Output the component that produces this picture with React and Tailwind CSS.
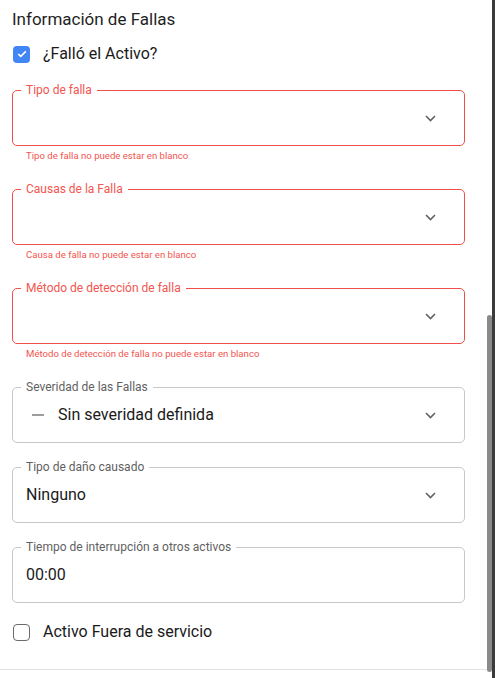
import React from 'react';

const RED = 'text-[#f2554f]';

function Chevron() {
  return (
    <svg width="11" height="7" viewBox="0 0 11 7" className="shrink-0">
      <path d="M1 1l4.5 4.5L10 1" fill="none" stroke="#616161" strokeWidth="1.6" />
    </svg>
  );
}

function Field({ label, error, helper, children, chevron = true, last }) {
  return (
    <div className={last ? '' : error ? 'mb-[27px]' : 'mb-[24px]'}>
      <div
        className={
          'relative flex h-[56px] w-[453px] items-center rounded-[5px] border pl-[13px] pr-[28px] ' +
          (error ? 'border-[#f0504a]' : 'border-[#c8c8c8]')
        }
      >
        <span
          className={
            'absolute -top-[9px] left-[8px] bg-white px-[5px] text-[12px] leading-[16px] ' +
            (error ? RED : 'text-[#5f5f5f]')
          }
        >
          {label}
        </span>
        <div className="flex flex-1 items-center text-[16px] text-[#1a1a1a]">{children}</div>
        {chevron && <Chevron />}
      </div>
      {helper && (
        <p className={'mt-[4px] pl-[14px] text-[9.6px] leading-[12px] ' + RED}>{helper}</p>
      )}
    </div>
  );
}

function Checkbox({ checked, label }) {
  return (
    <div className="flex items-center">
      {checked ? (
        <span className="flex h-[17px] w-[17px] items-center justify-center rounded-[4px] bg-[#4285f4]">
          <svg width="10" height="8" viewBox="0 0 10 8">
            <path d="M1.2 4l2.6 2.4L8.8 1.4" fill="none" stroke="white" strokeWidth="1.6" />
          </svg>
        </span>
      ) : (
        <span className="h-[17px] w-[17px] rounded-[4px] border-[1.5px] border-[#6b6b6b]" />
      )}
      <span className="ml-[13px] text-[16px] leading-[24px] text-[#1a1a1a]">{label}</span>
    </div>
  );
}

export default function App() {
  return (
    <div
      className="flex h-[678px] w-[495px] overflow-hidden bg-white"
      style={{ fontFamily: 'Roboto, "Liberation Sans", sans-serif' }}
    >
      <div className="w-[487px]">
        <div className="h-[670px] border-b border-[#e2e2e2] pl-[12px]">
          <h2 className="pt-[7px] text-[17px] leading-[24px] text-[#1f1f1f]">
            Información de Fallas
          </h2>
          <div className="mt-[11px] mb-[24px] pl-[1px]">
            <Checkbox checked label="¿Falló el Activo?" />
          </div>

          <Field label="Tipo de falla" error helper="Tipo de falla no puede estar en blanco" />
          <Field label="Causas de la Falla" error helper="Causa de falla no puede estar en blanco" />
          <Field
            label="Método de detección de falla"
            error
            helper="Método de detección de falla no puede estar en blanco"
          />
          <Field label="Severidad de las Fallas">
            <span className="ml-[6px] mr-[14px] h-[2px] w-[12px] bg-[#9e9e9e]" />
            <span>Sin severidad definida</span>
          </Field>
          <Field label="Tipo de daño causado">
            <span>Ninguno</span>
          </Field>
          <Field label="Tiempo de interrupción a otros activos" chevron={false} last>
            <span>00:00</span>
          </Field>

          <div className="mt-[17px] pl-[1px]">
            <Checkbox label="Activo Fuera de servicio" />
          </div>
        </div>
      </div>
      <div className="w-[5px] pt-[315px]">
        <div className="h-[357px] w-[5px] rounded-full bg-[#8a8a8a]" />
      </div>
      <div className="w-[3px] bg-[#3b3b3b]" />
    </div>
  );
}
